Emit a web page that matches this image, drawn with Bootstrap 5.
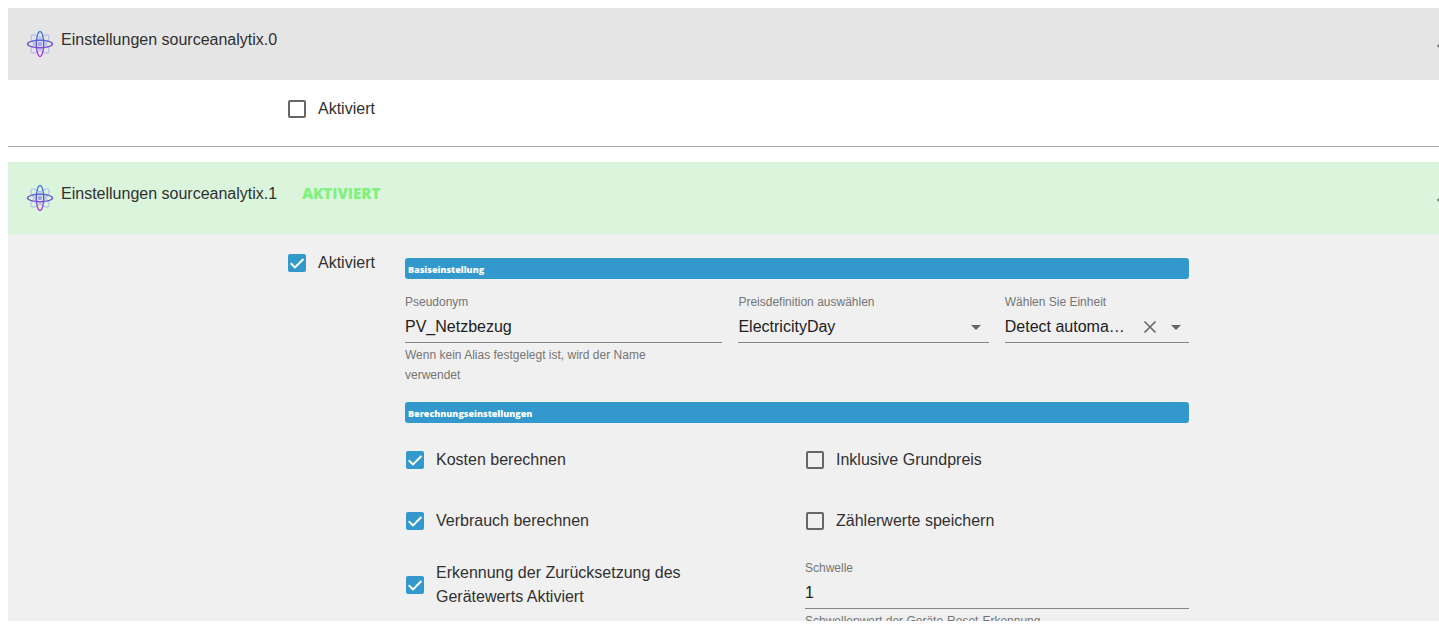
<!DOCTYPE html>
<html lang="de">
<head>
<meta charset="utf-8">
<meta name="viewport" content="width=device-width, initial-scale=1">
<title>Einstellungen sourceanalytix</title>
<link href="https://cdn.jsdelivr.net/npm/bootstrap@5.3.0/dist/css/bootstrap.min.css" rel="stylesheet">
<style>
  body { font: 16px/24px "Liberation Sans", Arial, sans-serif; color: #303030; background: #fff; }
  .pane { height: calc(100vh - 4px); overflow: hidden; }
  .panel-head { height: 72px; padding: 20px 0 0 18px; background: #e5e5e5; }
  .panel-head.is-active { background: #dbf4dc; }
  .atom { width: 28px; height: 28px; margin: 2px 7px 0 0; }
  .state { margin-left: 25px; font: 800 15px/22px "Open Sans", "Noto Sans", sans-serif; color: #80f080; }
  .toggle { width: 24px; height: 24px; margin: 4px -16px 0 auto; color: #666; }
  .rule { height: 1px; background: #a3a8a5; margin-bottom: 15px; }
  .columns { display: grid; grid-template-columns: 280fr 117fr 784fr 250fr; }
  .panel-off { height: 66px; padding-top: 17px; }
  .panel-on { background: #f0f0f0; padding-top: 17px; }
  .tick { display: flex; align-items: center; gap: 12px; }
  .tick .form-check-input { flex: none; width: 18px; height: 18px; margin: 0; border: 2px solid #666; border-radius: 2px; background-color: transparent; }
  .tick .form-check-input:checked { border-color: #3399cc; background-color: #3399cc; background-size: 18px 18px; background-position: center;
    background-image: url("data:image/svg+xml,%3Csvg xmlns='http://www.w3.org/2000/svg' viewBox='0 0 18 18'%3E%3Cpath d='M2.7 9.2 7 13.4 15.4 5' fill='none' stroke='%23fff' stroke-width='2'/%3E%3C/svg%3E"); }
  .settings { padding-top: 7px; }
  .bar-title { height: 21px; margin: 0; padding: 1px 3px 0; border-radius: 3px; background: #3399cc; color: #fff; font: 800 9px/21px "Open Sans", "Noto Sans", sans-serif; }
  .fields { display: grid; grid-template-columns: 317fr 250fr 184fr; gap: 16px; margin: 13px 0 17px; }
  .field label, .help-text { display: block; font-size: 12px; line-height: 20px; color: #757575; }
  .help-text { margin-top: 2px; }
  .field .form-control, .field .form-select { height: 31px; padding: 0; border: 0; border-bottom: 1px solid #868686; border-radius: 0; background: none; color: #212121; font-size: 16px; line-height: 30px; }
  .field .form-select { text-overflow: ellipsis; padding-right: 28px; }
  .field .form-select.clearable { padding-right: 62px; }
  .field-tools { position: absolute; right: 1px; top: 2px; height: 24px; pointer-events: none; color: #666; }
  .field-tools button { pointer-events: auto; width: 20px; height: 24px; margin-right: 4px; color: inherit; }
  .field-tools svg, .toggle svg { display: block; }
  .options { display: grid; grid-template-columns: 1fr 1fr; grid-template-rows: 61px 61px auto; column-gap: 16px; margin-top: 6px; }
  .options .tick { padding-left: 1px; }
  .options .long { max-width: 300px; height: 68px; }
  .options .field { padding-top: 7px; }
</style>
</head>
<body>
<svg class="position-absolute" width="0" height="0" aria-hidden="true">
  <defs>
    <linearGradient id="orbit" gradientUnits="userSpaceOnUse" x1="0" y1="1" x2="0" y2="27"><stop offset="0" stop-color="#4b8fe0"/><stop offset=".5" stop-color="#6655d0"/><stop offset="1" stop-color="#bd3fe8"/></linearGradient>
    <linearGradient id="halo" gradientUnits="userSpaceOnUse" x1="0" y1="1" x2="0" y2="27"><stop offset="0" stop-color="#72cdf0"/><stop offset="1" stop-color="#d69af5"/></linearGradient>
    <symbol id="atom" viewBox="0 0 28 28">
      <g fill="none" stroke="url(#halo)" stroke-width="1.2" opacity=".75"><ellipse cx="14" cy="14" rx="12" ry="4.5" transform="rotate(45 14 14)"/><ellipse cx="14" cy="14" rx="12" ry="4.5" transform="rotate(-45 14 14)"/></g>
      <g fill="none" stroke="url(#orbit)" stroke-width="1.4"><ellipse cx="14" cy="14" rx="12.5" ry="3.7"/><ellipse cx="14" cy="14" rx="3.7" ry="12.5"/></g>
      <circle cx="14" cy="14" r="2.2" fill="#9aa5f0"/>
    </symbol>
  </defs>
</svg>
<main class="pane pt-2 ps-2">
  <section>
    <header class="panel-head d-flex align-items-start">
      <svg class="atom" aria-hidden="true"><use href="#atom"/></svg>
      <span>Einstellungen sourceanalytix.0</span>
      <button type="button" class="toggle btn p-0 border-0" aria-label="Einklappen"><svg width="24" height="24" viewBox="0 0 24 24" fill="currentColor"><path d="m12 8-6 6 1.400 1.400 4.600-4.600 4.600 4.600L18 14z"/></svg></button>
    </header>
    <div class="columns panel-off">
      <span></span>
      <div><div class="tick"><input class="form-check-input" type="checkbox" id="on0"><label for="on0">Aktiviert</label></div></div>
    </div>
  </section>
  <div class="rule"></div>
  <section>
    <header class="panel-head is-active d-flex align-items-start">
      <svg class="atom" aria-hidden="true"><use href="#atom"/></svg>
      <span>Einstellungen sourceanalytix.1</span>
      <span class="state">AKTIVIERT</span>
      <button type="button" class="toggle btn p-0 border-0" aria-label="Einklappen"><svg width="24" height="24" viewBox="0 0 24 24" fill="currentColor"><path d="m12 8-6 6 1.400 1.400 4.600-4.600 4.600 4.600L18 14z"/></svg></button>
    </header>
    <div class="columns panel-on">
      <span></span>
      <div><div class="tick"><input class="form-check-input" type="checkbox" id="on1" checked><label for="on1">Aktiviert</label></div></div>
      <div class="settings">
        <h2 class="bar-title">Basiseinstellung</h2>
        <div class="fields">
          <div class="field">
            <label for="alias">Pseudonym</label>
            <input class="form-control shadow-none" type="text" id="alias" value="PV_Netzbezug">
            <div class="help-text">Wenn kein Alias festgelegt ist, wird der Name<br>verwendet</div>
          </div>
          <div class="field">
            <label for="price">Preisdefinition auswählen</label>
            <div class="position-relative">
              <select class="form-select shadow-none" id="price"><option>ElectricityDay</option></select>
              <div class="field-tools d-flex"><svg width="24" height="24" viewBox="0 0 24 24" fill="currentColor"><path d="m7 11 5 5 5-5z"/></svg></div>
            </div>
          </div>
          <div class="field">
            <label for="unit">Wählen Sie Einheit</label>
            <div class="position-relative">
              <select class="form-select clearable shadow-none" id="unit"><option>Detect automatically</option></select>
              <div class="field-tools d-flex"><button type="button" class="btn p-0 border-0" aria-label="Auswahl löschen"><svg width="20" height="24" viewBox="0 0 20 24" fill="none" stroke="currentColor" stroke-width="1.6"><path d="m4.500 7.500 11 11m0-11-11 11"/></svg></button><svg width="24" height="24" viewBox="0 0 24 24" fill="currentColor"><path d="m7 11 5 5 5-5z"/></svg></div>
            </div>
          </div>
        </div>
        <h2 class="bar-title">Berechnungseinstellungen</h2>
        <div class="options">
          <div class="tick"><input class="form-check-input" type="checkbox" id="costs" checked><label for="costs">Kosten berechnen</label></div>
          <div class="tick"><input class="form-check-input" type="checkbox" id="basic"><label for="basic">Inklusive Grundpreis</label></div>
          <div class="tick"><input class="form-check-input" type="checkbox" id="usage" checked><label for="usage">Verbrauch berechnen</label></div>
          <div class="tick"><input class="form-check-input" type="checkbox" id="meter"><label for="meter">Zählerwerte speichern</label></div>
          <div class="tick long"><input class="form-check-input" type="checkbox" id="reset" checked><label for="reset">Erkennung der Zurücksetzung des Gerätewerts Aktiviert</label></div>
          <div class="field">
            <label for="limit">Schwelle</label>
            <input class="form-control shadow-none" type="text" id="limit" value="1">
            <div class="help-text">Schwellenwert der Geräte-Reset-Erkennung</div>
          </div>
        </div>
      </div>
    </div>
  </section>
</main>
<script src="https://cdn.jsdelivr.net/npm/bootstrap@5.3.0/dist/js/bootstrap.bundle.min.js"></script>
</body>
</html>
